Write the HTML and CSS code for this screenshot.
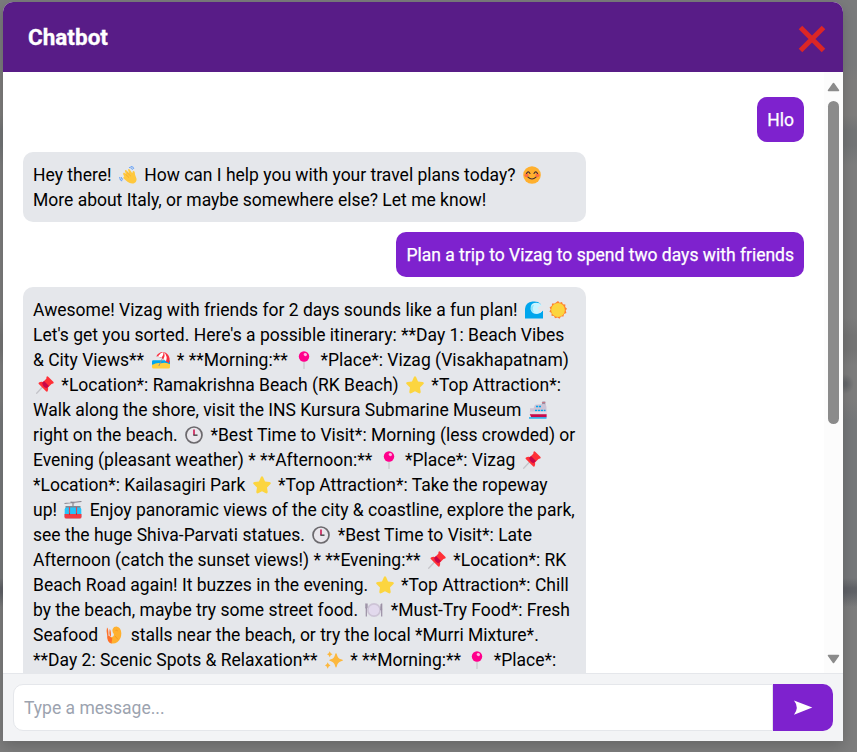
FILE: index.html
```
<!DOCTYPE html>
<html lang="en">
<head>
<meta charset="utf-8">
<title>Chatbot</title>
<link rel="stylesheet" href="styles.css">
</head>
<body>
<svg class="sprite" width="0" height="0">
  <symbol id="wave-hand" viewBox="0 0 18 18"><path d="M4.300 8.800Q3.600 7.200 5 6.600L7 8 5.800 5Q6.300 3.500 7.600 4.400L10 7 9 3.600Q9.600 2.500 10.700 3.400L13.300 7.200Q13.300 4.700 15 5Q16 5.600 16 8.500L17.600 13Q17.600 16.500 14.500 17.500Q11 18 8.500 15.800L4.600 12.400Q3.700 11 5.300 10.500Z" fill="#ffc83d"/><path d="M6.500 8.300L10 11.500M8 6.500L11.700 10" stroke="#f5a62a" stroke-width=".8" fill="none"/><path d="M10 1.600Q12.400 1 13.700 3.700M11.600.5Q14.300.2 14.800 3M.6 11Q.4 13.600 3.200 14.900M2.200 11Q2.300 12.500 4 13.500" stroke="#75a9f4" stroke-width="1.100" fill="none"/></symbol>
  <symbol id="smile" viewBox="0 0 18 18"><circle cx="9" cy="9" r="8.800" fill="#ffb02e"/><circle cx="3.500" cy="9.200" r="2" fill="#ff7042"/><circle cx="14.500" cy="9.200" r="2" fill="#ff7042"/><path d="M3.500 7.500Q5.200 4.200 7 7.500M11 7.500Q12.800 4.200 14.500 7.500M5 11.200Q9 14.800 13 11.200" fill="none" stroke="#402a32" stroke-width="1.100" stroke-linecap="round"/></symbol>
  <symbol id="sea-wave" viewBox="0 0 18 18"><path d="M0 17.500V8Q.5 1.500 7.500.6Q13 0 15.500 2.800L18 9.800V17.500Z" fill="#00a6ed"/><path d="M7 3Q10 1 14.500 2.200L17.500 5V9.800Q16.500 12.500 12 13Q7 13 5.700 8.500Q5 5 7 3Z" fill="#caf4ff"/><path d="M9 4Q6.500 8 9.300 11.500Q5.800 10.500 5.700 7Q6.500 4 9 4Z" fill="#8ee6fb"/><path d="M14 .3H18V9.800Q16 11.800 13 11.200Q16 9 13.500 8.500Q11.500 7.500 13.500 6Q14.500 4.500 17 4.500Z" fill="#e5e7eb"/><path d="M18 9.800V14H9.500Q15 13.500 18 9.800Z" fill="#00a6ed"/></symbol>
  <symbol id="sun" viewBox="0 0 18 18"><path d="M9 0L10.700 1.800 13 1 13.900 3.200 16.400 3.500 16.200 6 18 7.700 16.700 9.600 17.400 12 15 13 14.500 15.500 12 15.400 10.500 17.700 8.500 16.400 6 17.300 5 15 2.500 14.700 2.600 12.200.4 10.600 1.600 8.500.6 6.200 2.800 5 3 2.500 5.600 2.600Z" fill="#ff822d"/><circle cx="9" cy="9" r="6.900" fill="#fcd53f"/></symbol>
  <symbol id="beach" viewBox="0 0 18 18"><rect y="9.300" width="18" height="5" rx="1.200" fill="#00a6ed"/><path d="M0 14Q5 11 9 12.300Q14 10.700 18 13.300V16Q18 17.500 16.500 17.500H1.500Q0 17.500 0 16Z" fill="#ffce3c"/><path d="M10.800 6.500L6.800 15" stroke="#8d8d92" stroke-width=".9"/><path d="M4.200 5.500Q6.500.8 11.500 1Q16.500 2.200 17.600 7.500Q18 10 16.800 12.300Q15.500 10.700 14.600 11Q13.500 8.700 11.300 8.600Q10 6 7.400 6.200Q6 5 4.200 5.500Z" fill="#f92f40"/><path d="M11.500 1Q8.800 1.600 6 5.300L7.400 6.200Q8.600 5.700 9.500 6.800Q11.800 4 11.500 1ZM12.300 1.300Q13.300 4.500 11.300 8.600Q13 8.500 14 10.200Q15.800 5.500 12.300 1.300Z" fill="#fff"/></symbol>
  <symbol id="round-pin" viewBox="0 0 18 18"><rect x="8.400" y="9" width="1.200" height="9" rx=".6" fill="#c6c6ca"/><circle cx="9" cy="5.500" r="5.200" fill="#ff008c"/><ellipse cx="10.300" cy="3.600" rx="1.700" ry="1.500" fill="#ffb9e1" transform="rotate(35 10.300 3.600)"/></symbol>
  <symbol id="pushpin" viewBox="0 0 18 18"><path d="M.3 17.700L7.500 10" stroke="#c4c4c9" stroke-width="1.300"/><path d="M10.500 1Q11-.2 12.200.7L17.300 5.800Q18.200 7 17 7.400L15.500 8 12 11.500Q12.500 14 11.400 15.400Q10.700 16 10 15.200L2.800 8Q2.200 7.300 3 6.600Q4.500 5.500 7 6L10.300 2.700Z" fill="#ff3037"/><path d="M8 5L13 10 10.500 12.300Q7 11.300 6.200 7Z" fill="#c90648"/></symbol>
  <symbol id="star" viewBox="0 0 18 18"><path d="M7.700 1.500Q9-.8 10.300 1.500L12 5.400 16.500 5.900Q19 6.400 17 8.500L14 11.500 14.700 15.700Q14.700 18.200 12.300 17L9 15.200 5.700 17Q3.300 18.200 3.300 15.700L4 11.500 1 8.500Q-1 6.400 1.500 5.900L6 5.400Z" fill="#fcd53f"/></symbol>
  <symbol id="ship" viewBox="0 0 18 18"><path d="M13.400.5H16.300V5H12.500Z" fill="#998ea4"/><path d="M12.900 1.500H16.300" stroke="#d66d7b" stroke-width=".7"/><path d="M6 3.800L14.800 3Q17.500 3 17.500 6.500V14H1V7.300H4.500Z" fill="#cdc4d6"/><path d="M7 5.500H12M6 9.500H16.500" stroke="#00a6ed" stroke-width="1.300" stroke-dasharray="2.200 .8"/><path d="M0 10.600H18V13.500H1.500Z" fill="#e0dce8"/><path d="M.8 13.300H17.600V16.200H2.200Z" fill="#ca0b4a"/><path d="M0 16.300H17.500V17.600H0Z" fill="#00a6ed"/></symbol>
  <symbol id="clock" viewBox="0 0 18 18"><circle cx="9" cy="9" r="8" fill="#e9e7ec" stroke="#6b696d" stroke-width="1.700"/><path d="M9 3.500V9" stroke="#ca0b4a" stroke-width="1.500"/><path d="M8.300 9.200H12.500" stroke="#504d51" stroke-width="1.500"/></symbol>
  <symbol id="cable-car" viewBox="0 0 18 18"><path d="M.5 2.500L17.500.5M6.500 1.200L11 1.700M9 2V6" stroke="#8b8790" stroke-width="1.200"/><path d="M1.500 5H16.500V8H1.500Z" fill="#7e8993"/><rect x=".7" y="6.500" width="16.600" height="10.700" rx="1.800" fill="#25c4fa"/><path d="M5.500 6V13M12.500 6V13" stroke="#d94b55" stroke-width="1.200"/><path d="M.5 13H17.500V16Q17.500 17.500 16 17.500H2Q.5 17.500.5 16Z" fill="#f23c43"/><path d="M5 13H6M12 13H13" stroke="#a73544" stroke-width="1.500"/></symbol>
  <symbol id="plate" viewBox="0 0 18 18"><circle cx="9" cy="9" r="7" fill="#cdc4d6"/><circle cx="9" cy="9" r="5.300" fill="#e2d9ed"/><path d="M1.300 2.500V15.600M16.700 2.500V15.600" stroke="#998ea4" stroke-width="1.200"/><path d="M.3 2.500V6Q.3 7.500 1.300 7.500T2.400 6V2.500M16.200 3Q15.200 6 15.500 9H16.700Z" stroke="#998ea4" stroke-width=".7" fill="none"/></symbol>
  <symbol id="shrimp" viewBox="0 0 18 18"><path d="M8 2.500Q8.500.5 11.500.4Q16 1 16.300 7Q16.500 13 12.500 16Q9 18.500 5 17Q2.500 14 5.500 11.500Q9.500 11 8.800 8Q6.500 5 8 2.500Z" fill="#ffb02e"/><path d="M2 1.500Q3.500 2.500 3.500 9L2.200 9.500Q1 5 2 1.500ZM4.700 3Q6 4 6 9.500L5 11Q3.800 7 4.700 3ZM2.200 8.500L7.300 12.300 6.500 17.500Q1.500 16 2.200 8.500Z" fill="#ff6f28"/><path d="M10 10L13 13.500M10.500 4.500Q12 3.800 12.800 5" stroke="#f49a21" fill="none"/></symbol>
  <symbol id="sparkles" viewBox="0 0 18 18"><path d="M11 2.300Q11.600 2.300 11.900 3.500Q12.700 7.500 16 8.300Q18 8.800 18 9.300T16 10.300Q12.700 11.200 11.900 15Q11.500 16.500 11 16.500T10.100 15Q9.300 11.200 6 10.300Q4.200 9.800 4.200 9.300T6 8.300Q9.300 7.500 10.100 3.500Q10.400 2.300 11 2.300ZM4.700.3Q5.400 2.700 7.500 3.300Q5.400 4 4.700 6.300Q4 4 2 3.300Q4 2.700 4.700.3ZM2.700 11.300Q3.400 14 5.500 14.500Q3.400 15 2.700 17.700Q2 15 0 14.500Q2 14 2.700 11.300Z" fill="#fcb83e"/></symbol>
</svg>
<div class="modal">
  <header class="header">
    <h1 class="title">Chatbot</h1>
    <svg class="close" viewBox="0 0 28 28"><path d="M2.500 2.500L25.500 25.500M25.500 2.500L2.500 25.500"/></svg>
  </header>
  <main class="body">
    <div class="messages">
      <div class="bubble user"><p>Hlo</p></div>
      <div class="bubble bot">
        <p>Hey there! <svg class="emoji"><use href="#wave-hand"/></svg> How can I help you with your travel plans today? <svg class="emoji"><use href="#smile"/></svg></p>
        <p>More about Italy, or maybe somewhere else? Let me know!</p>
      </div>
      <div class="bubble user"><p>Plan a trip to Vizag to spend two days with friends</p></div>
      <div class="bubble bot">
        <p>Awesome! Vizag with friends for 2 days sounds like a fun plan! <svg class="emoji"><use href="#sea-wave"/></svg><svg class="emoji"><use href="#sun"/></svg></p>
        <p>Let's get you sorted. Here's a possible itinerary: **Day 1: Beach Vibes</p>
        <p>&amp; City Views** <svg class="emoji"><use href="#beach"/></svg> * **Morning:** <svg class="emoji"><use href="#round-pin"/></svg> *Place*: Vizag (Visakhapatnam)</p>
        <p><svg class="emoji"><use href="#pushpin"/></svg> *Location*: Ramakrishna Beach (RK Beach) <svg class="emoji"><use href="#star"/></svg> *Top Attraction*:</p>
        <p>Walk along the shore, visit the INS Kursura Submarine Museum <svg class="emoji"><use href="#ship"/></svg></p>
        <p>right on the beach. <svg class="emoji"><use href="#clock"/></svg> *Best Time to Visit*: Morning (less crowded) or</p>
        <p>Evening (pleasant weather) * **Afternoon:** <svg class="emoji"><use href="#round-pin"/></svg> *Place*: Vizag <svg class="emoji"><use href="#pushpin"/></svg></p>
        <p>*Location*: Kailasagiri Park <svg class="emoji"><use href="#star"/></svg> *Top Attraction*: Take the ropeway</p>
        <p>up! <svg class="emoji"><use href="#cable-car"/></svg> Enjoy panoramic views of the city &amp; coastline, explore the park,</p>
        <p>see the huge Shiva-Parvati statues. <svg class="emoji"><use href="#clock"/></svg> *Best Time to Visit*: Late</p>
        <p>Afternoon (catch the sunset views!) * **Evening:** <svg class="emoji"><use href="#pushpin"/></svg> *Location*: RK</p>
        <p>Beach Road again! It buzzes in the evening. <svg class="emoji"><use href="#star"/></svg> *Top Attraction*: Chill</p>
        <p>by the beach, maybe try some street food. <svg class="emoji"><use href="#plate"/></svg> *Must-Try Food*: Fresh</p>
        <p>Seafood <svg class="emoji"><use href="#shrimp"/></svg> stalls near the beach, or try the local *Murri Mixture*.</p>
        <p>**Day 2: Scenic Spots &amp; Relaxation** <svg class="emoji"><use href="#sparkles"/></svg> * **Morning:** <svg class="emoji"><use href="#round-pin"/></svg> *Place*:</p>
      </div>
    </div>
    <div class="scrollbar">
      <svg class="arrow" viewBox="0 0 13 10"><path d="M6.500 1.500L11.500 8.500H1.500Z"/></svg>
      <div class="track"><div class="thumb"></div></div>
      <svg class="arrow" viewBox="0 0 13 10"><path d="M6.500 8.500L11.500 1.500H1.500Z"/></svg>
    </div>
  </main>
  <form class="composer">
    <input class="field" type="text" placeholder="Type a message...">
    <button class="send" type="button"><svg width="20" height="16" viewBox="0 0 20 16"><path d="M1 .5L19.300 7.500 1 14.700Q6.500 7.500 1 .5Z" fill="#fff"/></svg></button>
  </form>
</div>
</body>
</html>
```
FILE: styles.css
```
* { box-sizing: border-box; }
body {
  margin: 0;
  height: 752px;
  padding: 2px 14px 11px 3px;
  overflow: hidden;
  font-family: Roboto, sans-serif;
  background:
    radial-gradient(ellipse 9px 10px at 845px 384px, #66686b 20%, transparent),
    linear-gradient(transparent 578px, #606267 588px, #606267 592px, transparent 607px),
    linear-gradient(#7a7b7c 0 65px, #7e7d7c 80px 115px, #737576 130px 145px, #7d7d7d 165px 318px, #757575 335px 350px, #7d7d7d 365px 400px, #76787a 420px 580px, #7d7d7d 610px);
}
.sprite { position: absolute; }
.modal {
  display: flex;
  flex-direction: column;
  height: 739px;
  border-radius: 10px 10px 0 0;
  overflow: hidden;
  background: #fff;
  box-shadow: 0 5px 14px rgba(0, 0, 0, .18);
}
.header {
  display: flex;
  flex: none;
  align-items: center;
  justify-content: space-between;
  height: 70px;
  padding: 0 17px 0 25px;
  background: #581c87;
}
.title { margin: 0; color: #fff; font-size: 22.500px; line-height: 35px; font-weight: 700; -webkit-text-stroke: .3px #fff; }
.close { width: 28px; height: 28px; margin-top: 3px; fill: none; stroke: #dc2626; stroke-width: 5; }
.body { display: flex; flex: 1; min-height: 0; }
.messages {
  display: flex;
  flex: 1;
  flex-direction: column;
  align-items: flex-start;
  gap: 10px;
  padding: 25px 20px 0;
  overflow: hidden;
}
.bubble { flex: none; padding: 11px 10px 9px; border-radius: 10px; font-size: 17.500px; line-height: 25px; }
.bubble p { margin: 0; height: 25px; white-space: nowrap; }
.user { align-self: flex-end; background: #7e22ce; color: #fff; -webkit-text-stroke: .25px #fff; }
.bot { width: 563px; background: #e5e7eb; color: #000; }
.emoji { width: 18px; height: 18px; margin: 0 3px; vertical-align: -3px; }
.scrollbar {
  display: flex;
  flex-direction: column;
  align-items: center;
  width: 19px;
  padding: 10px 0 9px;
  background: #fcfcfc;
}
.arrow { flex: none; width: 13px; height: 10px; fill: #8b8b8b; stroke: #8b8b8b; stroke-width: 1.500; stroke-linejoin: round; }
.track { flex: 1; padding-top: 9px; }
.thumb { width: 11px; height: 323px; border-radius: 6px; background: #8b8b8b; }
.composer { display: flex; flex: none; height: 68px; margin: 0; padding: 10px; border-top: 1px solid #e5e7eb; background: #f3f4f6; }
.field {
  flex: 1;
  min-width: 0;
  height: 47px;
  padding: 0 10px;
  border: 1px solid #e5e7eb;
  border-radius: 10px 0 0 10px;
  outline: 0;
  background: #fff;
  font: 17.500px/25px Roboto, sans-serif;
}
.field::placeholder { color: #9ca3af; opacity: 1; }
.send {
  display: flex;
  align-items: center;
  justify-content: center;
  width: 60px;
  height: 47px;
  padding: 0;
  border: 0;
  border-radius: 0 10px 10px 0;
  background: #7e22ce;
}
```
